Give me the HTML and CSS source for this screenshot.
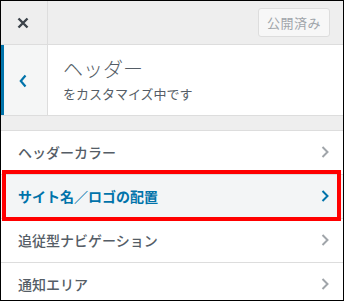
FILE: index.html
```html
<!DOCTYPE html>
<html lang="ja">
<head>
<meta charset="utf-8">
<link rel="stylesheet" href="styles.css">
</head>
<body>
<div class="frame">
  <div class="topbar">
    <div class="close">
      <svg width="12" height="12" viewBox="0 0 12 12"><path d="M1.5 1.5 L10.5 10.5 M10.5 1.5 L1.5 10.5" stroke="#3c434a" stroke-width="2.4" fill="none"/></svg>
    </div>
    <div class="publish">公開済み</div>
  </div>
  <div class="section-head">
    <div class="back">
      <svg width="8" height="14" viewBox="0 0 8 14"><path d="M6.5 1.5 L1.8 7 L6.5 12.5" stroke="#0073aa" stroke-width="2.2" fill="none"/></svg>
    </div>
    <div class="titles">
      <div class="title">ヘッダー</div>
      <div class="subtitle">をカスタマイズ中です</div>
    </div>
  </div>
  <div class="band"></div>
  <ul class="list">
    <li class="item"><span>ヘッダーカラー</span><svg class="chev" width="8" height="12" viewBox="0 0 8 12"><path d="M1.5 1 L6.5 6 L1.5 11" stroke="currentColor" stroke-width="2" fill="none"/></svg></li>
    <li class="item active"><span>サイト名／ロゴの配置</span><svg class="chev" width="8" height="12" viewBox="0 0 8 12"><path d="M1.5 1 L6.5 6 L1.5 11" stroke="currentColor" stroke-width="2" fill="none"/></svg></li>
    <li class="item"><span>追従型ナビゲーション</span><svg class="chev" width="8" height="12" viewBox="0 0 8 12"><path d="M1.5 1 L6.5 6 L1.5 11" stroke="currentColor" stroke-width="2" fill="none"/></svg></li>
    <li class="item"><span>通知エリア</span><svg class="chev" width="8" height="12" viewBox="0 0 8 12"><path d="M1.5 1 L6.5 6 L1.5 11" stroke="currentColor" stroke-width="2" fill="none"/></svg></li>
  </ul>
  <div class="highlight"></div>
</div>
</body>
</html>
```
FILE: styles.css
```css
* { box-sizing: border-box; }
html, body { margin: 0; padding: 0; background: #fff; }
body { font-family: "Noto Sans CJK JP", "Noto Sans", sans-serif; color: #555d66; }
.frame {
  position: relative;
  width: 344px;
  height: 301px;
  border: 1px solid #000;
  overflow: hidden;
  background: #fff;
}
.topbar {
  display: flex;
  align-items: center;
  height: 44px;
  background: #eee;
  border-bottom: 1px solid #ddd;
}
.close {
  width: 47px;
  height: 43px;
  border-right: 1px solid #ddd;
  display: flex;
  align-items: center;
  justify-content: center;
  padding-right: 2px;
}
.publish {
  margin-left: auto;
  margin-right: 13px;
  width: 72px;
  height: 29px;
  border: 1px solid #ddd;
  border-radius: 3px;
  background: #f7f7f7;
  color: #a0a5aa;
  font-size: 13px;
  display: flex;
  align-items: center;
  justify-content: center;
  letter-spacing: 0.5px;
}
.section-head {
  display: flex;
  height: 71px;
  border-bottom: 1px solid #ddd;
  background: #fff;
}
.back {
  width: 47px;
  border-left: 3px solid #0073aa;
  border-right: 1px solid #ddd;
  background: #f5f6f6;
  display: flex;
  align-items: center;
  justify-content: center;
  padding-right: 5px;
  padding-top: 2px;
}
.titles {
  padding: 11px 0 0 15px;
}
.title {
  font-size: 20px;
  line-height: 26px;
  font-weight: 300;
  color: #555d66;
}
.subtitle {
  font-size: 13px;
  line-height: 20px;
  margin-top: 2px;
  color: #555d66;
}
.band {
  height: 15px;
  background: #eee;
  border-bottom: 1px solid #ddd;
}
.list {
  list-style: none;
  margin: 0;
  padding: 0;
}
.item {
  display: flex;
  align-items: center;
  justify-content: space-between;
  height: 44px;
  padding: 0 14px 1px 17px;
  border-bottom: 1px solid #ddd;
  font-size: 14px;
  font-weight: 500;
  color: #555d66;
  background: #fff;
}
.item .chev { color: #a0a5aa; }
.item.active {
  background: #f3f5f6;
  color: #0073aa;
  font-weight: 700;
}
.item.active .chev { color: #0073aa; }
.highlight {
  position: absolute;
  left: 1px;
  top: 169px;
  width: 339px;
  height: 51px;
  border: 4px solid #ff0000;
}
```
